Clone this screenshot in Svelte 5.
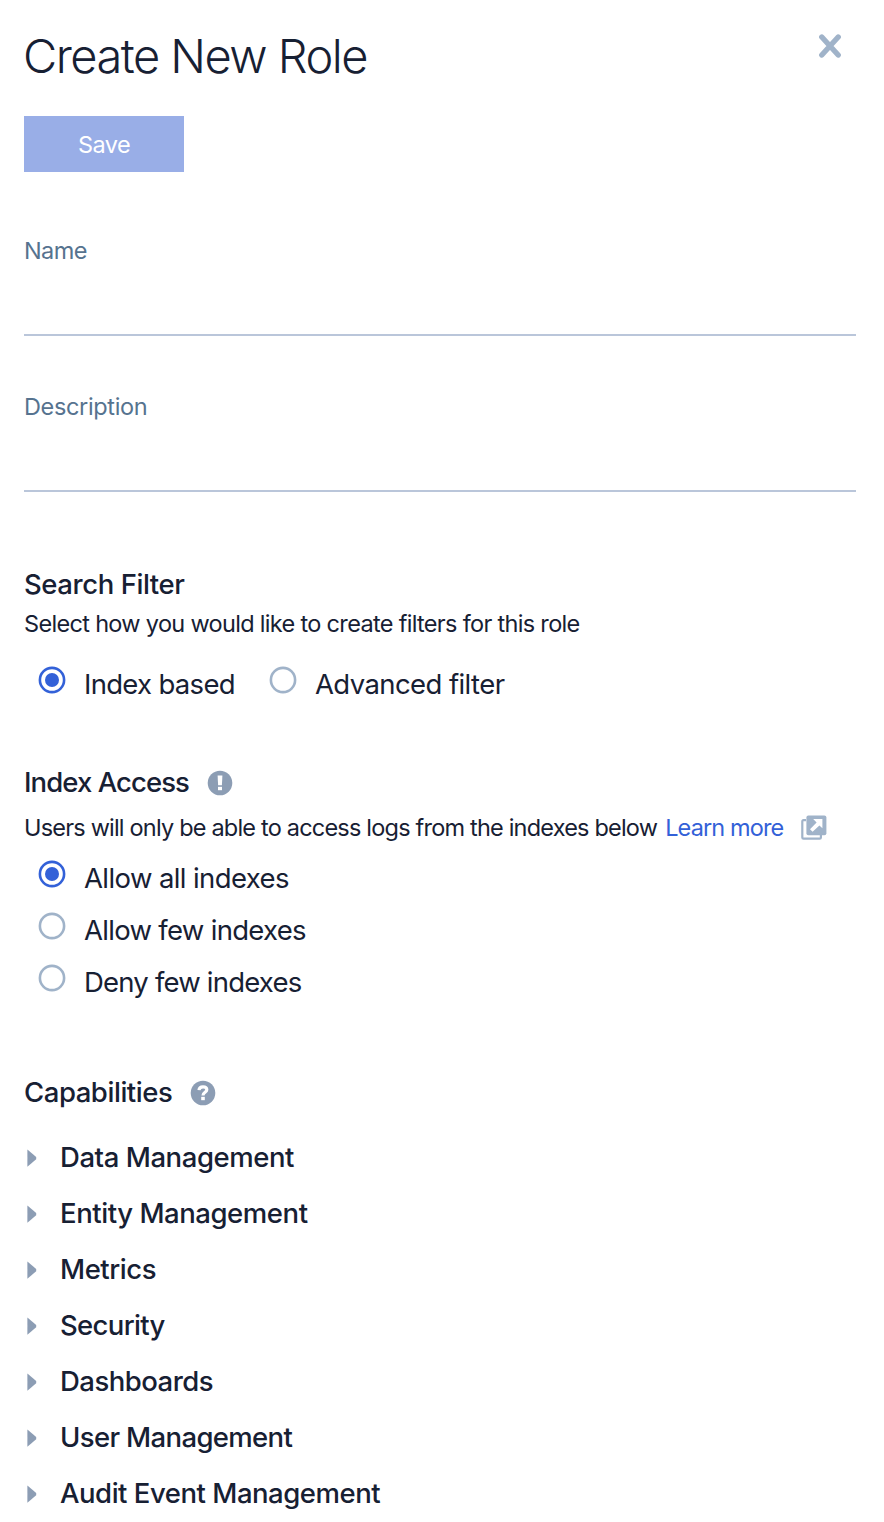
<script>
  // Each label carries its tracking in pixels.
  const capabilities = [
    ['Data Management', -0.43],
    ['Entity Management', -0.44],
    ['Metrics', -0.46],
    ['Security', -0.65],
    ['Dashboards', -0.52],
    ['User Management', -0.64],
    ['Audit Event Management', -0.47]
  ];
  const filterModes = [
    ['Index based', -0.7],
    ['Advanced filter', -0.58]
  ];
  const indexModes = [
    ['Allow all indexes', -0.6],
    ['Allow few indexes', -0.7],
    ['Deny few indexes', -0.8]
  ];
  const fields = [
    ['Name', -0.6],
    ['Description', -0.35]
  ];

  let filterMode = $state(0);
  let indexMode = $state(0);
</script>

{#snippet text(label, tracking)}
  <span style:letter-spacing="{tracking}px">{label}</span>
{/snippet}

{#snippet radio(item, checked, select)}
  <button class="radio" role="radio" aria-checked={checked} onclick={select}>
    <svg width="28" height="28" viewBox="0 0 28 28">
      <circle cx="14" cy="14" r="12.1" fill="none" stroke={checked ? '#3361d8' : '#a0b3c9'} stroke-width="2.6" />
      {#if checked}<circle cx="14" cy="14" r="7" fill="#3361d8" />{/if}
    </svg>
    {@render text(item[0], item[1])}
  </button>
{/snippet}

<main>
  <header>
    <h1>{@render text('Create New Role', -1.52)}</h1>
    <svg class="close" width="24" height="26" viewBox="0 0 24 26">
      <path d="M3.8 4L20.2 22M20.2 4L3.8 22" stroke="#a0b3c9" stroke-width="5.4" stroke-linecap="round" />
    </svg>
  </header>

  <button class="save">{@render text('Save', -0.6)}</button>

  {#each fields as [label, tracking]}
    <label class="field">
      {@render text(label, tracking)}
      <input type="text" />
    </label>
  {/each}

  <section class="filter">
    <h2>{@render text('Search Filter', -0.43)}</h2>
    <p>{@render text('Select how you would like to create filters for this role', -0.68)}</p>
    <div class="inline">
      {#each filterModes as item, i}{@render radio(item, filterMode === i, () => (filterMode = i))}{/each}
    </div>
  </section>

  <section class="access">
    <h2 class="raised">
      {@render text('Index Access', -0.92)}
      <svg width="26" height="26" viewBox="0 0 26 26">
        <circle cx="13" cy="13" r="12.3" fill="#8c9db4" />
        <path d="M10.6 5.4H15.4L14.9 15.2H11.1Z" fill="#fff" />
        <rect x="11" y="16.8" width="4" height="3.4" fill="#fff" />
      </svg>
    </h2>
    <p>
      {@render text('Users will only be able to access logs from the indexes below', -0.8)}
      <a href="#learn">{@render text('Learn more', -0.87)}</a>
      <svg class="external" width="26" height="26" viewBox="0 0 26 26">
        <path d="M5 5.2H2.5Q1.3 5.2 1.3 6.4V22.4Q1.3 23.6 2.5 23.6H18.7Q19.9 23.6 19.9 22.4V20" fill="none" stroke="#a0b3c9" stroke-width="2.2" />
        <rect x="5.4" y=".4" width="20" height="19.8" rx="2" fill="#a0b3c9" />
        <path d="M12.2 4H21.4V13.2L18.4 10.5L11.6 16.8L9 14.2L15.6 7.6Z" fill="#fff" />
      </svg>
    </p>
    {#each indexModes as item, i}{@render radio(item, indexMode === i, () => (indexMode = i))}{/each}
  </section>

  <section class="caps">
    <h2 class="raised">
      {@render text('Capabilities', -0.45)}
      <svg width="26" height="26" viewBox="0 0 26 26">
        <circle cx="13" cy="13" r="12.3" fill="#8c9db4" />
        <path d="M9 10.2C9.2 7.8 10.8 6.9 13 6.9C15.2 6.9 16.8 7.9 16.8 9.8C16.8 12.3 13 12.3 13 15.4" fill="none" stroke="#fff" stroke-width="3.2" />
        <rect x="11.2" y="16.8" width="3.6" height="3.4" fill="#fff" />
      </svg>
    </h2>
    <ul>
      {#each capabilities as [label, tracking]}
        <li class="raised">
          <svg width="10" height="18" viewBox="0 0 10 18"><path d="M.4 .4L9.2 8V10.2L.4 17.8Z" fill="#8c9db4" /></svg>
          {@render text(label, tracking)}
        </li>
      {/each}
    </ul>
  </section>
</main>

<style>
  :global(body) { background: #fff; overflow: hidden; }
  main { box-sizing: border-box; height: 1522px; overflow: hidden; padding: 26px 28px 0 24px; font-family: Inter, 'Liberation Sans', sans-serif; color: #172033; white-space: nowrap; }
  svg { display: block; flex: none; }
  button { border: 0; padding: 0; font-family: inherit; color: inherit; background: none; }
  header { display: flex; justify-content: space-between; align-items: flex-start; }
  h1 { margin: 0 0 0 -1px; font-size: 47px; line-height: 60px; font-weight: 300; }
  .close { margin: 7px 14px 0 0; }
  .save { display: block; width: 160px; height: 56px; margin: 30px 0 8px; padding-top: 2px; background: #99aee7; color: #fff; font-size: 23.5px; line-height: 54px; }
  .field { display: flex; flex-direction: column; box-sizing: border-box; height: 156px; padding-top: 54px; font-size: 23.5px; line-height: 34px; color: #56738f; }
  input { flex: 1; min-height: 0; border: 0; border-bottom: 2px solid #bac6da; padding: 0; outline: 0; background: none; font: inherit; }
  h2 { display: flex; align-items: center; gap: 18px; height: 40px; margin: 0; font-size: 27.5px; line-height: 40px; font-weight: 500; }
  p { display: flex; align-items: center; margin: 0; font-size: 23.5px; line-height: 40px; }
  a { margin-left: 8px; color: #3361d8; text-decoration: none; }
  .external { margin-left: 18px; }
  .raised span { margin-bottom: 2px; }
  .radio { display: flex; align-items: center; gap: 18px; height: 52px; padding-left: 14px; font-size: 27.5px; line-height: 52px; }
  .radio svg { margin-bottom: 9px; }
  .filter { padding-top: 72px; }
  .inline { display: flex; gap: 20px; margin-top: 14px; }
  .access { padding-top: 53px; }
  .access p { margin: 5px 0 4px; }
  .caps { padding-top: 65px; }
  ul { list-style: none; margin: 17px 0 0; padding: 0; }
  li { display: flex; align-items: center; gap: 23px; height: 56px; padding-left: 3px; font-size: 27.5px; line-height: 56px; font-weight: 500; }
</style>
